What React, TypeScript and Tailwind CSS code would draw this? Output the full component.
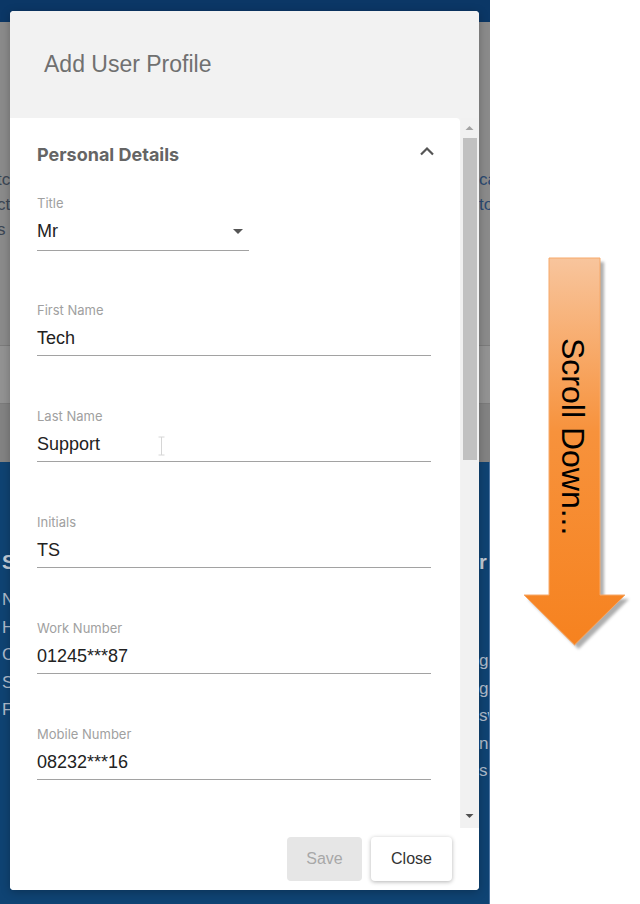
import React from 'react'

const ui = { fontFamily: '"Liberation Sans", Arial, sans-serif' }
const geo = { fontFamily: 'Inter, "Noto Sans", sans-serif' }

const fields = [
  { label: 'First Name', value: 'Tech' },
  { label: 'Last Name', value: 'Support', cursor: true },
  { label: 'Initials', value: 'TS' },
  { label: 'Work Number', value: '01245***87' },
  { label: 'Mobile Number', value: '08232***16' },
  { label: 'Email Address', value: 'tech.support@example.com' },
]

const arrowPath = 'M29 8 H80 V345 H105 L54.5 395 L4 345 H29 Z'

// page behind the dialog, only its edges show
function Backdrop() {
  return (
    <div className="w-[490px] h-[904px] flex flex-col overflow-hidden" style={ui}>
      <div className="h-[22px] bg-[#0b3766]" />
      <div className="h-[440px] bg-[#8b8b8b] flex flex-col">
        <div className="pt-[145px] flex justify-between text-[17px] leading-[25px] text-[#3b4654]">
          <div className="w-[10px] overflow-hidden whitespace-nowrap">
            <div className="-ml-[3px]">tc</div>
            <div className="-ml-[3px]">ct</div>
            <div className="-ml-[3px]">s</div>
          </div>
          <div className="w-[11px] overflow-hidden whitespace-nowrap text-[#2b4a72]">
            <div>ca</div>
            <div>to</div>
            <div>&nbsp;</div>
          </div>
        </div>
        <div className="mt-[103px] h-[59px] border-y border-[#7c7c7c] bg-[#939393]" />
        <div className="flex-1 bg-[#838383]" />
      </div>
      <div className="flex-1 bg-[#0f4373] flex justify-between text-[#aebbcb]">
        <div className="w-[10px] overflow-hidden whitespace-nowrap pl-[2px] pt-[88px]">
          <div className="text-[20px] leading-[24px] font-bold text-[#c3ccd7]">S</div>
          <div className="mt-[12px] text-[17px] leading-[27.5px]">
            <div>N</div>
            <div>H</div>
            <div>C</div>
            <div>S</div>
            <div>F</div>
          </div>
        </div>
        <div className="w-[11px] overflow-hidden whitespace-nowrap pt-[88px] border-r border-[#4d76a3]">
          <div className="text-[20px] leading-[24px] font-bold text-[#c3ccd7]">r</div>
          <div className="mt-[73px] text-[17px] leading-[27.5px]">
            <div>g</div>
            <div>ge</div>
            <div>sw</div>
            <div>nl</div>
            <div>s</div>
          </div>
        </div>
      </div>
    </div>
  )
}

function Field({ label, value, cursor }: { label: string; value: string; cursor?: boolean }) {
  return (
    <div className="relative mt-[52px] border-b border-[#a2a2a2] pb-[5px]">
      <div className="text-[13px] leading-[16px] text-[#a0a0a0]" style={geo}>{label}</div>
      <div className="mt-[8px] text-[18px] leading-[24px] text-[#222222] whitespace-nowrap" style={ui}>{value}</div>
      {cursor && (
        <svg className="absolute left-[121px] top-[28px]" width="7" height="20" viewBox="0 0 7 20">
          <path d="M0.5 1 H6.5 M3.5 1 V19 M0.5 19 H6.5" stroke="#d6d6d6" strokeWidth="1" fill="none" />
        </svg>
      )}
    </div>
  )
}

function Scrollbar() {
  return (
    <div className="w-[17px] ml-[1px] bg-[#f1f1f1] flex flex-col items-center">
      <svg className="mt-[7px]" width="9" height="6" viewBox="0 0 9 6">
        <path d="M0.5 5 L4.5 1 L8.5 5 Z" fill="#a3a3a3" />
      </svg>
      <div className="mt-[7px] w-[14px] h-[322px] bg-[#c1c1c1]" />
      <div className="flex-1" />
      <svg className="mb-[9px]" width="9" height="6" viewBox="0 0 9 6">
        <path d="M0.5 1 L4.5 5 L8.5 1 Z" fill="#505050" />
      </svg>
    </div>
  )
}

function Dialog() {
  return (
    <div className="absolute left-[10px] top-[11px] w-[469px] h-[879px] rounded-[4px] bg-white overflow-hidden shadow-[0_2px_10px_rgba(0,0,0,0.25)] flex flex-col">
      <div className="h-[107px] bg-[#f2f2f2] pl-[34px] pt-[39px]">
        <h1 className="text-[23px] leading-[28px] text-[#707070]" style={ui}>Add User Profile</h1>
      </div>
      <div className="h-[710px] bg-[#f2f2f2] flex">
        <div className="w-[450px] bg-white rounded-tr-[4px] overflow-hidden pl-[27px] pr-[29px] pt-[25px]">
          <div className="flex items-center justify-between h-[24px]">
            <h2 className="text-[18px] leading-[24px] font-bold text-[#656565]" style={geo}>Personal Details</h2>
            <svg className="-mr-[4px] -mt-[8px]" width="16" height="10" viewBox="0 0 16 10">
              <path d="M2 8.5 L8 2.5 L14 8.5" stroke="#555555" strokeWidth="2.2" fill="none" />
            </svg>
          </div>
          <div className="mt-[28px] w-[212px] border-b border-[#a2a2a2] pb-[7px]">
            <div className="text-[13px] leading-[16px] text-[#a0a0a0]" style={geo}>Title</div>
            <div className="mt-[8px] flex items-center justify-between pr-[6px]">
              <span className="text-[18px] leading-[24px] text-[#222222]" style={ui}>Mr</span>
              <svg width="10" height="5" viewBox="0 0 10 5">
                <path d="M0 0 H10 L5 5 Z" fill="#555555" />
              </svg>
            </div>
          </div>
          <div className="-mt-[1px]">
            {fields.map((f) => (
              <Field key={f.label} label={f.label} value={f.value} cursor={f.cursor} />
            ))}
          </div>
        </div>
        <Scrollbar />
      </div>
      <div className="flex-1 bg-white flex justify-end items-start gap-[9px] pt-[9px] pr-[27px]" style={ui}>
        <button className="w-[75px] h-[44px] rounded-[4px] bg-[#e6e6e6] text-[16px] text-[#a8a8a8]">Save</button>
        <button className="w-[81px] h-[44px] rounded-[4px] bg-white text-[16px] text-[#333333] shadow-[0_1px_4px_rgba(0,0,0,0.3)]">Close</button>
      </div>
    </div>
  )
}

export default function App() {
  return (
    <div className="w-[640px] h-[904px] flex bg-white overflow-hidden">
      <div className="relative">
        <Backdrop />
        <Dialog />
      </div>
      <div className="flex-1 pt-[250px] pl-[30px]">
        <svg width="112" height="404" viewBox="0 0 112 404">
          <defs>
            <linearGradient id="arrowFill" x1="0" y1="0" x2="0" y2="1">
              <stop offset="0" stopColor="#f8c59d" />
              <stop offset="0.45" stopColor="#f7923c" />
              <stop offset="1" stopColor="#f6821f" />
            </linearGradient>
            <filter id="arrowShadow" x="-20%" y="-10%" width="140%" height="120%">
              <feGaussianBlur stdDeviation="1.8" />
            </filter>
          </defs>
          <path d={arrowPath} transform="translate(4 4)" fill="#8c8c8c" opacity="0.7" filter="url(#arrowShadow)" />
          <path d={arrowPath} fill="url(#arrowFill)" stroke="#f6a96a" strokeWidth="1" />
          <text
            transform="translate(42 88) rotate(90)"
            fontFamily='"Liberation Sans", Arial, sans-serif'
            fontSize="32"
            fill="#000000"
          >
            Scroll Down...
          </text>
        </svg>
      </div>
    </div>
  )
}
